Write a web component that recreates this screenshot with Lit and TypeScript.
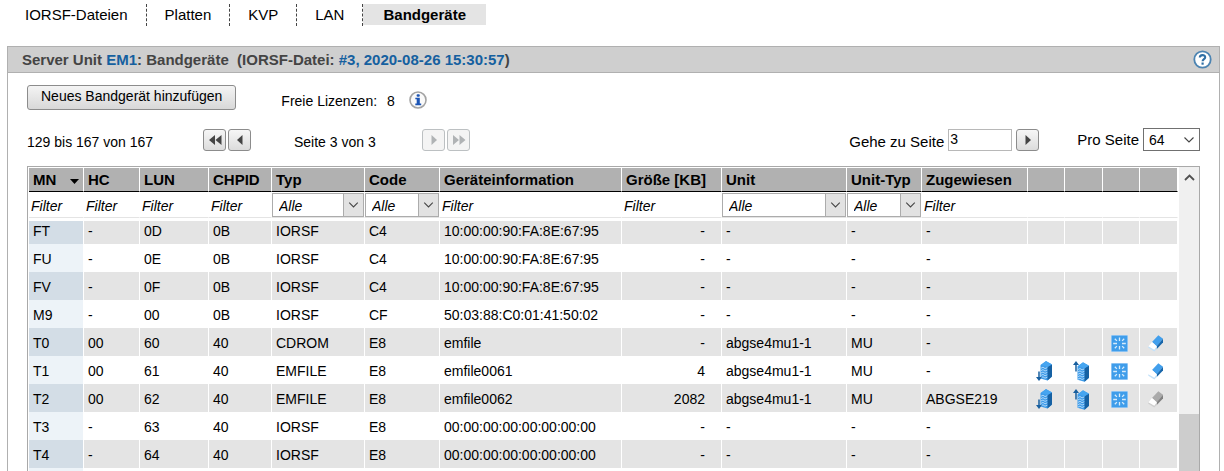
import { LitElement, html, svg, css, nothing } from "lit";
import { customElement } from "lit/decorators.js";
import { classMap } from "lit/directives/class-map.js";

interface Column {
  key: string;
  label: string;
  width: number;
  filter: "text" | "select" | "none";
  right?: boolean;
}

// A width of 0 lets the column take the remaining space.
const COLUMNS: Column[] = [
  { key: "mn", label: "MN", width: 55, filter: "text" },
  { key: "hc", label: "HC", width: 56, filter: "text" },
  { key: "lun", label: "LUN", width: 69, filter: "text" },
  { key: "chpid", label: "CHPID", width: 63, filter: "text" },
  { key: "typ", label: "Typ", width: 93, filter: "select" },
  { key: "code", label: "Code", width: 75, filter: "select" },
  { key: "info", label: "Geräteinformation", width: 0, filter: "text" },
  { key: "size", label: "Größe [KB]", width: 100, filter: "text", right: true },
  { key: "unit", label: "Unit", width: 125, filter: "select" },
  { key: "unitType", label: "Unit-Typ", width: 75, filter: "select" },
  { key: "assigned", label: "Zugewiesen", width: 106, filter: "text" },
  { key: "a1", label: "", width: 37, filter: "none" },
  { key: "a2", label: "", width: 38, filter: "none" },
  { key: "a3", label: "", width: 37, filter: "none" },
  { key: "a4", label: "", width: 38, filter: "none" },
];

const DATA_KEYS = COLUMNS.slice(0, 11);

// Data cells in column order, followed by the list of available actions.
const ROWS: [string[], string[]][] = [
  [["FT", "-", "0D", "0B", "IORSF", "C4", "10:00:00:90:FA:8E:67:95", "-", "-", "-", "-"], ["", "", "", ""]],
  [["FU", "-", "0E", "0B", "IORSF", "C4", "10:00:00:90:FA:8E:67:95", "-", "-", "-", "-"], ["", "", "", ""]],
  [["FV", "-", "0F", "0B", "IORSF", "C4", "10:00:00:90:FA:8E:67:95", "-", "-", "-", "-"], ["", "", "", ""]],
  [["M9", "-", "00", "0B", "IORSF", "CF", "50:03:88:C0:01:41:50:02", "-", "-", "-", "-"], ["", "", "", ""]],
  [["T0", "00", "60", "40", "CDROM", "E8", "emfile", "-", "abgse4mu1-1", "MU", "-"], ["", "", "init", "erase"]],
  [["T1", "00", "61", "40", "EMFILE", "E8", "emfile0061", "4", "abgse4mu1-1", "MU", "-"], ["down", "up", "init", "erase"]],
  [["T2", "00", "62", "40", "EMFILE", "E8", "emfile0062", "2082", "abgse4mu1-1", "MU", "ABGSE219"], ["down", "up", "init", "erase-off"]],
  [["T3", "-", "63", "40", "IORSF", "E8", "00:00:00:00:00:00:00:00", "-", "-", "-", "-"], ["", "", "", ""]],
  [["T4", "-", "64", "40", "IORSF", "E8", "00:00:00:00:00:00:00:00", "-", "-", "-", "-"], ["", "", "", ""]],
  [["", "", "", "", "", "", "", "", "", "", ""], ["", "", "", ""]],
];

const chevron = html`<svg class="chevron" width="20" height="22" viewBox="0 0 20 22" aria-hidden="true">
  <path d="M5.5 8.5 L10 13 L14.5 8.5" fill="none" stroke="#444" stroke-width="1.1" />
</svg>`;

const tower = svg`
  <path d="M4.5 4 L10 0 L16 3.5 L15.5 16 L11.5 19.5 L4.5 17.5Z" fill="#3d9be9" />
  <path d="M11.5 6 L16 3.5 V15.5 L11.5 19.5Z" fill="#1661a3" />
  <path d="M5 4 L10 0.3 L15.8 3.3 L11.5 5.9Z" fill="#46a5f0" />
  <path d="M5 7.2 L7 6.2 L9 7.6 L11.3 6.6 M5 9.6 L7 8.6 L9 10 L11.3 9 M5 12 L7 11 L9 12.4 L11.3 11.4 M5 14.4 L7 13.4 L9 14.8 L11.3 13.8 M5 16.8 L7 15.8 L9 17.2 L11.3 16.2" fill="none" stroke="#b9dcf9" stroke-width="0.9" />`;

function actionIcon(name: string) {
  switch (name) {
    case "down":
      return html`<svg width="17" height="21" viewBox="0 0 17 21">${tower}
        <path d="M3 10.5 V17" stroke="#185f9f" stroke-width="1.5" /><path d="M0 16 H6 L3 20Z" fill="#185f9f" /></svg>`;
    case "up":
      return html`<svg width="17" height="21" viewBox="0 0 17 21"><g transform="translate(0 1.3)">${tower}</g>
        <path d="M3 3 V10.5" stroke="#185f9f" stroke-width="1.5" /><path d="M0 4 H6 L3 0Z" fill="#185f9f" /></svg>`;
    case "init":
      return html`<svg width="17" height="17" viewBox="0 0 17 17"><rect width="17" height="17" rx="1" fill="#a9d2f5" /><rect x="0.7" y="0.7" width="15.6" height="15.6" fill="#3f9dea" />
        <path d="M8.5 2.5 V6 M8.5 11 V14.5 M2.2 8.5 H6 M11 8.5 H14.8 M3.8 3.8 L5.9 5.9 M13.2 3.8 L11.1 5.9 M3.8 13.2 L5.9 11.1 M13.2 13.2 L11.1 11.1" stroke="#d8ecfb" stroke-width="1.3" /></svg>`;
    case "erase":
    case "erase-off": {
      const [top, side, low] = name === "erase" ? ["#429fec", "#1866aa", "#c3e1f9"] : ["#aaaaaa", "#808080", "#cfcfcf"];
      return html`<svg width="16" height="17" viewBox="0 0 16 17">
        <path d="M10.3 0.3 L15 3.7 L9 11.5 L4 7Z" fill=${top} />
        <path d="M15 3.7 V7.5 L8.5 14.2 L8.8 11.2Z" fill=${side} />
        <path d="M4 7 L9 11.5 L6.3 15.6 L0.3 11.5Z" fill="#ffffff" />
        <path d="M0.3 11.3 L6.3 14.8 L8.9 11.3 L8.6 14 L6.3 16.4 L0.3 12.8Z" fill=${low} /></svg>`;
    }
    default:
      return nothing;
  }
}

const ACTION_LABELS: Record<string, string> = {
  down: "Exportieren",
  up: "Importieren",
  init: "Initialisieren",
  erase: "Entfernen",
  "erase-off": "Entfernen",
};

@customElement("app-root")
export class AppRoot extends LitElement {
  static styles = css`
    :host {
      display: flex;
      flex-direction: column;
      height: 100vh;
      overflow: hidden;
      box-sizing: border-box;
      padding: 4px 4px 0 7px;
      background: #fff;
      color: #000;
      font-family: "Liberation Sans", Arial, sans-serif;
      font-size: 14px;
      line-height: 20px;
    }
    * { box-sizing: border-box; }
    a { color: inherit; text-decoration: none; }
    svg { display: block; }
    button, input, select { font: inherit; color: inherit; margin: 0; }

    .tabs { display: flex; height: 22px; font-size: 15px; }
    .tab { padding: 1px 18px 0; border-right: 1px dashed #444; }
    .tab:last-child { border-right: 0; }
    .tab.active { height: 21px; padding: 1px 20px 0; background: #e4e4e4; font-weight: bold; }

    .panel {
      flex: 1;
      min-height: 0;
      display: flex;
      flex-direction: column;
      margin-top: 20px;
      border: 1px solid #b0b0b0;
      border-bottom: 0;
    }
    .title {
      display: flex;
      align-items: center;
      justify-content: space-between;
      height: 26px;
      padding: 0 7px 0 14px;
      background: #cfcfcf;
      border-bottom: 1px solid #b0b0b0;
    }
    h1 { margin: 0; font-size: 15px; line-height: 20px; color: #444; white-space: pre; }
    h1 a { color: #15609f; }
    .content {
      flex: 1;
      min-height: 0;
      display: flex;
      flex-direction: column;
      padding: 12px 19px 0;
    }
    .actions { display: flex; align-items: flex-start; }
    .btn {
      height: 25px;
      padding: 0 13px 4px;
      border: 1px solid #8c8c8c;
      border-radius: 3px;
      background: linear-gradient(#f4f4f4, #d8d8d8);
    }
    .licenses { display: flex; gap: 10px; padding: 6px 0 0 45px; }
    .licenses svg { margin-left: 4px; }

    .pager { display: flex; align-items: center; height: 24px; margin-top: 17px; }
    .range { width: 176px; padding-top: 4px; }
    .page { width: 128px; padding-top: 4px; }
    .nav { display: flex; gap: 2px; }
    .nav.back { width: 91px; }
    .icon-btn {
      display: flex;
      align-items: center;
      justify-content: center;
      width: 23px;
      height: 22px;
      padding: 0;
      border: 1px solid #8c8c8c;
      border-radius: 3px;
      background: linear-gradient(#f6f6f6, #dcdcdc);
      color: #444;
    }
    .icon-btn:disabled { border-color: #bcc0c2; background: #f4f4f4; color: #b0b3b5; }
    .goto { display: flex; align-items: center; margin-left: auto; }
    .goto label { padding: 4px 4px 0 0; font-size: 15px; }
    .goto input {
      width: 64px;
      height: 22px;
      margin-right: 4px;
      padding: 0 1px 2px;
      border: 1px solid #b8b8b8;
    }
    .per { display: flex; align-items: center; gap: 4px; margin-left: 38px; }
    .per label { font-size: 15px; }

    .sel { display: grid; grid-template-columns: 1fr 22px; }
    .sel select {
      grid-area: 1 / 1 / 2 / 3;
      width: 100%;
      appearance: none;
      border: 1px solid #acacac;
      border-radius: 0;
      background: #fff;
      height: 24px;
      padding: 0 22px 0 6px;
    }
    .sel .chevron { grid-area: 1 / 2; margin: 1px; pointer-events: none; }
    .per .sel { width: 57px; }
    .per select { height: 23px; padding-left: 5px; border-color: #707070; }

    .grid {
      flex: 1;
      min-height: 0;
      display: flex;
      gap: 1px;
      margin-top: 14px;
      border: 1px solid #a9a9a9;
      border-bottom: 0;
    }
    .tables { flex: 1; min-width: 0; display: flex; flex-direction: column; padding: 1px 0 0 1px; }
    table { width: 100%; table-layout: fixed; border-collapse: separate; border-spacing: 0; }
    th, td { padding: 0; text-align: left; overflow: hidden; white-space: nowrap; border-right: 1px solid #fff; }
    .head th {
      height: 24px;
      padding: 0 0 0 4px;
      background: #b1b1b1;
      border-bottom: 1px solid #000;
      font-size: 15px;
    }
    .sorted { display: flex; align-items: center; justify-content: space-between; padding-right: 4px; }
    .sorted svg { margin-top: 4px; }
    .head td { height: 26px; padding: 1px 0 0; border-bottom: 1px solid #e4e4e4; vertical-align: top; }
    .filter {
      display: block;
      width: 100%;
      height: 24px;
      padding: 2px 0 0 2px;
      border: 0;
      background: transparent;
      font-style: italic;
    }
    .filter::placeholder { color: #000; opacity: 1; }
    .head .sel { width: 100%; }
    .head select { font-style: italic; padding-top: 2px; }
    .head .chevron { height: 22px; background: #e2e2e2; border-left: 1px solid #acacac; }

    .scroll { flex: 1; min-height: 0; overflow: hidden; margin-top: 3px; }
    /* The list is scrolled a few pixels into its first row. */
    .body { margin-top: -5px; }
    .body th, .body td { height: 28px; padding: 2px 4px 0; font-weight: normal; }
    .body tr:nth-child(odd) td { background: #e4e4e4; }
    .body tr:nth-child(odd) th { background: #d3dde6; }
    .body tr:nth-child(even) th { background: #edf3f8; }
    .body td.right { text-align: right; padding-right: 16px; }
    .body td.icon { padding: 3px 0 0 8px; }
    .act { display: block; padding: 0; border: 0; background: none; }

    .bar { display: flex; flex-direction: column; width: 20px; background: #f0f0f0; }
    .bar button { display: flex; justify-content: center; padding: 7px 0 0; height: 20px; border: 0; background: none; }
    .rest { flex: 4; }
    .thumb { flex: 1; background: #cdcdcd; }
  `;

  private arrows(kind: "first" | "prev" | "next" | "last") {
    const d = {
      first: "M7 1 V11 L1 6Z M13.5 1 V11 L7.5 6Z",
      prev: "M9.5 1 V11 L4 6Z",
      next: "M4.5 1 V11 L10 6Z",
      last: "M1 1 V11 L7 6Z M7.5 1 V11 L13.5 6Z",
    }[kind];
    return html`<svg width="14" height="12" viewBox="0 0 14 12" aria-hidden="true"><path d=${d} fill="currentColor" /></svg>`;
  }

  private cols() {
    return html`<colgroup>
      ${COLUMNS.map((c) => html`<col width=${c.width || nothing} />`)}
    </colgroup>`;
  }

  private filterCell(c: Column) {
    if (c.filter === "none") return html`<td></td>`;
    if (c.filter === "select") {
      return html`<td><span class="sel"><select aria-label="Filter ${c.label}"><option>Alle</option></select>${chevron}</span></td>`;
    }
    return html`<td><input class="filter" placeholder="Filter" aria-label="Filter ${c.label}" /></td>`;
  }

  render() {
    const tabs = ["IORSF-Dateien", "Platten", "KVP", "LAN", "Bandgeräte"];
    return html`
      <nav class="tabs">
        ${tabs.map((t) => html`<a href="#" class=${classMap({ tab: true, active: t === "Bandgeräte" })}>${t}</a>`)}
      </nav>
      <section class="panel">
        <header class="title">
          <h1>Server Unit <a href="#">EM1</a>: Bandgeräte  (IORSF-Datei: <a href="#">#3, 2020-08-26 15:30:57</a>)</h1>
          <a href="#" aria-label="Hilfe"><svg width="19" height="19" viewBox="0 0 19 19">
            <circle cx="9.5" cy="9.5" r="8.2" fill="#fff" stroke="#4c84b2" stroke-width="1.8" />
            <path d="M6.8 7.6 C6.8 4.3 12.2 4.3 12.2 7.3 C12.2 9.2 9.6 9.2 9.6 11.3" fill="none" stroke="#2f6fa5" stroke-width="2.1" />
            <rect x="8.5" y="12.5" width="2.2" height="2.2" fill="#2f6fa5" />
          </svg></a>
        </header>
        <div class="content">
          <div class="actions">
            <button class="btn">Neues Bandgerät hinzufügen</button>
            <div class="licenses">
              <span>Freie Lizenzen:</span><span>8</span>
              <svg width="18" height="18" viewBox="0 0 18 18" aria-hidden="true">
                <circle cx="9" cy="9" r="8" fill="#fafafa" stroke="#a3a3a3" stroke-width="1.6" />
                <rect x="7.6" y="3.2" width="3.2" height="2.6" rx="1" fill="#1c55b5" />
                <path d="M6.3 6.8 H10.8 V12.6 H12.2 V14.2 H6.3 V12.6 H7.7 V8.3 H6.3Z" fill="#1c55b5" />
              </svg>
            </div>
          </div>
          <div class="pager">
            <span class="range">129 bis 167 von 167</span>
            <span class="nav back">
              <button class="icon-btn" aria-label="Erste Seite">${this.arrows("first")}</button>
              <button class="icon-btn" aria-label="Vorherige Seite">${this.arrows("prev")}</button>
            </span>
            <span class="page">Seite 3 von 3</span>
            <span class="nav">
              <button class="icon-btn" disabled aria-label="Nächste Seite">${this.arrows("next")}</button>
              <button class="icon-btn" disabled aria-label="Letzte Seite">${this.arrows("last")}</button>
            </span>
            <span class="goto">
              <label for="goto">Gehe zu Seite</label>
              <input id="goto" value="3" />
              <button class="icon-btn" aria-label="Seite öffnen">${this.arrows("next")}</button>
            </span>
            <span class="per">
              <label for="per">Pro Seite</label>
              <span class="sel"><select id="per"><option>64</option></select>${chevron}</span>
            </span>
          </div>
          <div class="grid">
            <div class="tables">
              <table class="head">
                ${this.cols()}
                <thead>
                  <tr>
                    ${COLUMNS.map((c) => html`<th scope="col">${c.key === "mn"
                      ? html`<span class="sorted">MN<svg width="9" height="5" viewBox="0 0 9 5"><path d="M0 0 H9 L4.5 5Z" /></svg></span>`
                      : c.label}</th>`)}
                  </tr>
                  <tr>${COLUMNS.map((c) => this.filterCell(c))}</tr>
                </thead>
              </table>
              <div class="scroll">
                <table class="body">
                  ${this.cols()}
                  <tbody>
                    ${ROWS.map(([cells, acts]) => html`<tr>
                      ${cells.map((v, i) => i === 0
                        ? html`<th scope="row">${v}</th>`
                        : html`<td class=${classMap({ right: !!DATA_KEYS[i].right })}>${v}</td>`)}
                      ${acts.map((a) => html`<td class="icon">${a
                        ? html`<button class="act" ?disabled=${a === "erase-off"} aria-label=${ACTION_LABELS[a]}>${actionIcon(a)}</button>`
                        : nothing}</td>`)}
                    </tr>`)}
                  </tbody>
                </table>
              </div>
            </div>
            <div class="bar">
              <button aria-label="Nach oben"><svg width="11" height="7" viewBox="0 0 11 7"><path d="M1 6 L5.5 1.5 L10 6" fill="none" stroke="#505050" stroke-width="1.8" /></svg></button>
              <div class="rest"></div>
              <div class="thumb"></div>
            </div>
          </div>
        </div>
      </section>
    `;
  }
}
